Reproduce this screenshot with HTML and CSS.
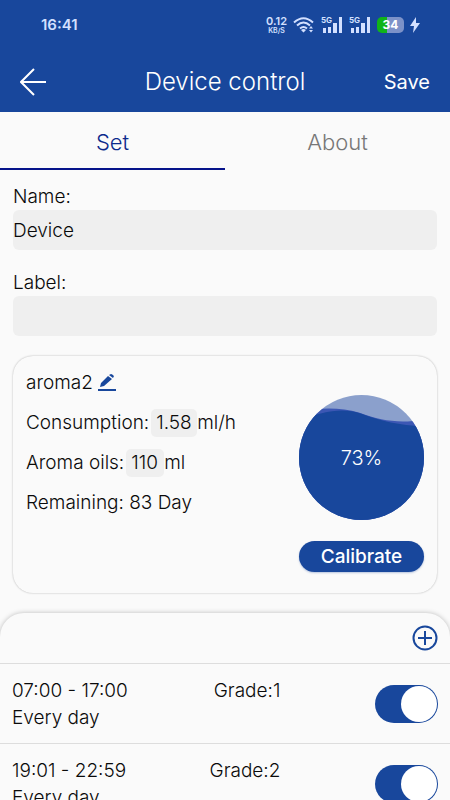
FILE: index.html
```html
<!DOCTYPE html>
<html lang="en">
<head>
<meta charset="utf-8">
<meta name="viewport" content="width=device-width, initial-scale=1">
<title>Device control</title>
<link rel="stylesheet" href="styles.css">
</head>
<body>
<div class="app">
  <header class="top">
    <div class="status">
      <span class="clock">16:41</span>
      <div class="status-icons">
        <div class="speed"><span class="speed-value">0.12</span><span class="speed-unit">KB/S</span></div>
        <svg class="wifi" viewBox="0 0 22 18" width="22" height="18" aria-hidden="true">
          <g fill="none" stroke="currentColor" stroke-width="2">
            <path d="M1 6.500Q10.500 -2 20 6.500"/>
            <path d="M4 9.500Q10.500 3.500 17 9.500"/>
            <path d="M7 12.500Q10.500 9.500 14 12.500"/>
          </g>
          <path fill="currentColor" d="M8 14Q10.500 12 13 14L10.500 16.500ZM16 12.500L18 10L20 12.500ZM16 14L18 16.500L20 14Z"/>
        </svg>
        <div class="signal">
          <svg viewBox="0 0 22 18" width="22" height="18" aria-hidden="true"><path fill="currentColor" d="M2 12h3v5H2zM7 11h3v6H7zM12 7h4v10h-4zM18 1h3v16h-3z"/></svg>
          <span class="network">5G</span>
        </div>
        <div class="signal">
          <svg viewBox="0 0 22 18" width="22" height="18" aria-hidden="true"><path fill="currentColor" d="M2 12h3v5H2zM7 11h3v6H7zM12 7h4v10h-4zM18 1h3v16h-3z"/></svg>
          <span class="network">5G</span>
        </div>
        <div class="battery">34</div>
        <svg class="bolt" viewBox="0 0 10 16" width="10" height="16" aria-hidden="true"><path fill="currentColor" d="M6 0L0 9h4L3 16L10 6H6Z"/></svg>
      </div>
    </div>
    <div class="appbar">
      <button class="back" type="button" aria-label="Back">
        <svg viewBox="0 0 28 28" width="28" height="28" fill="none" stroke="currentColor" stroke-width="2"><path d="M14 1L1 14L14 27M1 14H26"/></svg>
      </button>
      <h1>Device control</h1>
      <button class="save" type="button">Save</button>
    </div>
  </header>

  <nav class="tabs">
    <a class="tab active" href="#set">Set</a>
    <a class="tab" href="#about">About</a>
  </nav>

  <main class="content" id="set">
    <form class="fields">
      <div class="field">
        <label for="name">Name:</label>
        <input id="name" type="text" value="Device">
      </div>
      <div class="field">
        <label for="label">Label:</label>
        <input id="label" type="text">
      </div>
    </form>

    <section class="card">
      <div class="details">
        <div class="line">
          <span>aroma2</span>
          <button class="edit" type="button" aria-label="Edit name">
            <svg viewBox="0 0 18 18" width="18" height="18" fill="currentColor"><path d="M0 15h18v2H0ZM2 13L3 9L10 2L14 5L6 12ZM11 1L13 0Q14 0 16 2L15 4Z"/></svg>
          </button>
        </div>
        <div class="line">
          <label for="rate">Consumption:</label>
          <input class="value rate" id="rate" type="text" value="1.58">
          <span>ml/h</span>
        </div>
        <div class="line">
          <label for="oil">Aroma oils:</label>
          <input class="value oil" id="oil" type="text" value="110">
          <span>ml</span>
        </div>
        <div class="line">Remaining: 83 Day</div>
      </div>
      <div class="level">
        <div class="gauge">
          <svg viewBox="0 0 126 126" aria-hidden="true">
            <clipPath id="disc"><circle cx="63" cy="63" r="63"/></clipPath>
            <g clip-path="url(#disc)">
              <path fill="#8ba0cc" d="M0 0H126V126H0Z"/>
              <path fill="#3c57b4" d="M0 16C22 13 42 12 61 18C83 26 100 29 126 25V126H0Z"/>
              <path fill="#18479c" d="M0 25C25 17 43 12 63 19C84 27 100 30 126 32V126H0Z"/>
            </g>
          </svg>
          <span class="percent">73%</span>
        </div>
        <button class="calibrate" type="button">Calibrate</button>
      </div>
    </section>

    <section class="schedule">
      <div class="schedule-head">
        <button class="add" type="button" aria-label="Add schedule">
          <svg viewBox="0 0 26 26" width="26" height="26" fill="none" stroke="currentColor" stroke-width="2"><circle cx="13" cy="13" r="11.500"/><path d="M6 13H20M13 6V20"/></svg>
        </button>
      </div>
      <div class="row">
        <div class="times">
          <div class="slot"><span>07:00 - 17:00</span><span>Grade:1</span></div>
          <div>Every day</div>
        </div>
        <input class="switch" type="checkbox" role="switch" aria-label="07:00 - 17:00" checked>
      </div>
      <div class="row">
        <div class="times">
          <div class="slot"><span>19:01 - 22:59</span><span>Grade:2</span></div>
          <div>Every day</div>
        </div>
        <input class="switch" type="checkbox" role="switch" aria-label="19:01 - 22:59" checked>
      </div>
    </section>
  </main>
</div>
</body>
</html>
```
FILE: styles.css
```css
:root {
  --blue: #18479c;
  --page: #fafafa;
  --field: #efefef;
}

* { box-sizing: border-box; }

body {
  margin: 0;
  background: var(--page);
  color: #0a0a0a;
  font: 300 19px/28px Inter, "Liberation Sans", sans-serif;
}

button, input {
  margin: 0;
  padding: 0;
  border: 0;
  background: none;
  color: inherit;
  font: inherit;
}

svg { display: block; }

.app {
  display: flex;
  flex-direction: column;
  height: 100vh;
  overflow: hidden;
}

.top {
  flex: none;
  background: var(--blue);
  color: #fff;
}

.status {
  display: flex;
  justify-content: space-between;
  align-items: center;
  height: 50px;
  padding: 0 30px 0 41px;
  color: #d3e0ff;
}

.clock { font-size: 15px; font-weight: 600; }

.status-icons {
  display: flex;
  align-items: center;
  gap: 6px;
}

.speed {
  display: flex;
  flex-direction: column;
  align-items: center;
  font-weight: 600;
}

.speed-value { font-size: 11px; line-height: 11px; }
.speed-unit { font-size: 7px; line-height: 8px; }

.signal { position: relative; }

.network {
  position: absolute;
  top: 0;
  left: 0;
  font-size: 8px;
  font-weight: 700;
  line-height: 9px;
}

.battery {
  width: 27px;
  height: 16px;
  border-radius: 5px;
  background: linear-gradient(90deg, #10b418 36%, #7c92c8 36%);
  color: #fff;
  font-size: 12px;
  font-weight: 700;
  line-height: 16px;
  text-align: center;
}

.appbar {
  display: grid;
  grid-template-columns: 1fr auto 1fr;
  align-items: center;
  height: 62px;
  padding: 2px 20px 0;
}

.back { justify-self: start; }
.save { justify-self: end; font-size: 20px; font-weight: 400; }

h1 {
  margin: 0;
  font-size: 24px;
  font-weight: 300;
}

.tabs { display: flex; flex: none; }

.tab {
  flex: 1;
  height: 58px;
  border-bottom: 2px solid transparent;
  color: #777;
  font-size: 22px;
  line-height: 60px;
  text-align: center;
  text-decoration: none;
}

.tab.active { border-color: #06138a; color: #0c2a8c; }

.content {
  flex: 1;
  min-height: 0;
  overflow-y: auto;
  scrollbar-width: none;
}

.fields {
  display: grid;
  gap: 20px;
  padding: 14px 13px 20px;
}

.field { display: grid; line-height: 26px; }

.field input {
  width: 100%;
  height: 40px;
  border-radius: 6px;
  background: var(--field);
}

.card {
  display: flex;
  justify-content: space-between;
  margin: 0 13px 20px;
  padding: 13px;
  border-radius: 20px;
  box-shadow: 0 0 2px rgba(0, 0, 0, .3);
}

.details {
  display: flex;
  flex-direction: column;
  gap: 12px;
}

.line { display: flex; align-items: center; height: 28px; }

.edit { margin-left: 5px; color: var(--blue); }

.value {
  height: 28px;
  margin-left: 2px;
  padding-left: 5px;
  border-radius: 5px;
  background: var(--field);
}

.rate { width: 46px; }
.oil { width: 38px; }

.level {
  display: flex;
  flex-direction: column;
  gap: 21px;
  width: 125px;
  padding: 26px 0 8px;
}

.gauge { position: relative; }

.percent {
  position: absolute;
  inset: 0;
  display: grid;
  place-items: center;
  color: #fff;
  font-size: 20px;
}

.calibrate {
  height: 31px;
  border-radius: 16px;
  background: var(--blue);
  box-shadow: 0 1px 2px rgba(24, 71, 156, .3);
  color: #fff;
  font-weight: 500;
}

.schedule {
  border-radius: 24px 24px 0 0;
  box-shadow: 0 0 5px rgba(0, 0, 0, .25);
}

.schedule-head {
  display: flex;
  justify-content: flex-end;
  align-items: center;
  height: 50px;
  padding: 0 12px;
}

.add { color: var(--blue); }

.row {
  display: flex;
  justify-content: space-between;
  align-items: center;
  height: 80px;
  padding: 0 12px;
  border-top: 1px solid #ddd;
}

.times { flex: 0 0 63%; line-height: 27px; }
.slot { display: flex; justify-content: space-between; }

.switch {
  appearance: none;
  display: flex;
  width: 63px;
  height: 38px;
  padding: 1px;
  border-radius: 19px;
  background: #bbb;
}

.switch::before {
  content: "";
  width: 36px;
  height: 36px;
  border-radius: 50%;
  background: #fff;
}

.switch:checked { justify-content: flex-end; background: var(--blue); }
```
